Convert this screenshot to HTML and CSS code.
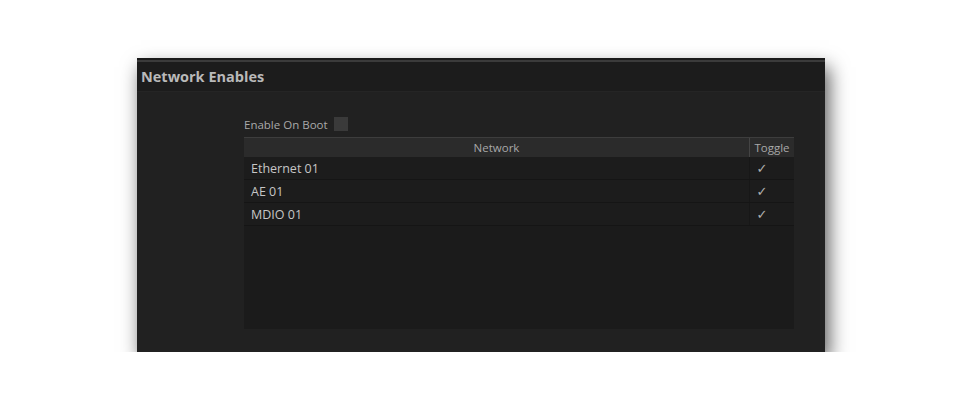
FILE: index.html
```html
<!DOCTYPE html>
<html lang="en">
<head>
    <meta charset="UTF-8">
    <title>Network Enables</title>
    <link rel="stylesheet" href="styles.css">
</head>
<body>

<div class="panel">
    <div class="panel-title">Network Enables</div>
    <div class="panel-body">
        <div class="boot-row">
            <span>Enable On Boot</span>
            <span class="checkbox"></span>
        </div>
        <div class="grid">
            <div class="grid-head">
                <div class="col-name">Network</div>
                <div class="col-toggle">Toggle</div>
            </div>
            <div class="grid-row">
                <div class="col-name">Ethernet 01</div>
                <div class="col-toggle">✓</div>
            </div>
            <div class="grid-row">
                <div class="col-name">AE 01</div>
                <div class="col-toggle">✓</div>
            </div>
            <div class="grid-row">
                <div class="col-name">MDIO 01</div>
                <div class="col-toggle">✓</div>
            </div>
        </div>
    </div>
</div>

</body>
</html>
```

FILE: styles.css
```css
body {
    background-color: #ffffff;
    margin: 0;
    padding: 58px 0 0 137px;
    font-family: "Open Sans", "Noto Sans", sans-serif;
}
.panel {
    width: 688px;
    height: 294px;
    background-color: #212121;
    border-top: 2px solid #1a1a1a;
    box-sizing: border-box;
    box-shadow: 4px 9px 18px rgba(0,0,0,0.65);
    display: flex;
    flex-direction: column;
}
.panel-title {
    border-top: 2px solid #3b3b3b;
    background-color: #1c1c1c;
    color: #b9b9b9;
    font-weight: bold;
    font-size: 14.5px;
    height: 29px;
    line-height: 29px;
    padding-left: 4px;
    border-bottom: 1px solid #252525;
}
.panel-body {
    padding: 24px 31px 23px 107px;
    flex: 1;
    display: flex;
    flex-direction: column;
}
.boot-row {
    display: flex;
    align-items: center;
    gap: 6px;
    color: #a9a9a9;
    font-size: 11.5px;
    height: 16px;
    margin-bottom: 5px;
}
.checkbox {
    width: 14px;
    height: 14px;
    background-color: #3a3a3a;
}
.grid {
    flex: 1;
    background-color: #1b1b1b;
}
.grid-head {
    display: flex;
    height: 19px;
    line-height: 19px;
    background-color: #2b2b2b;
    border-top: 1px solid #3d3d3d;
    color: #a8a8a8;
    font-size: 11.5px;
}
.grid-head .col-name {
    text-align: center;
    border-right: 1px solid #444;
}
.grid-row {
    display: flex;
    height: 22px;
    line-height: 24px;
    background-color: #1c1c1c;
    border-bottom: 1px solid #151515;
    color: #c6c6c6;
    font-size: 12.5px;
}
.grid-row .col-name {
    padding-left: 7px;
    border-right: 1px solid #171717;
}
.col-name {
    width: 506px;
    box-sizing: border-box;
}
.col-toggle {
    flex: 1;
    text-align: center;
}
.grid-row .col-toggle {
    font-family: "DejaVu Sans", sans-serif;
    color: #b0b0b0;
    font-size: 13px;
    padding-right: 20px;
}
```
